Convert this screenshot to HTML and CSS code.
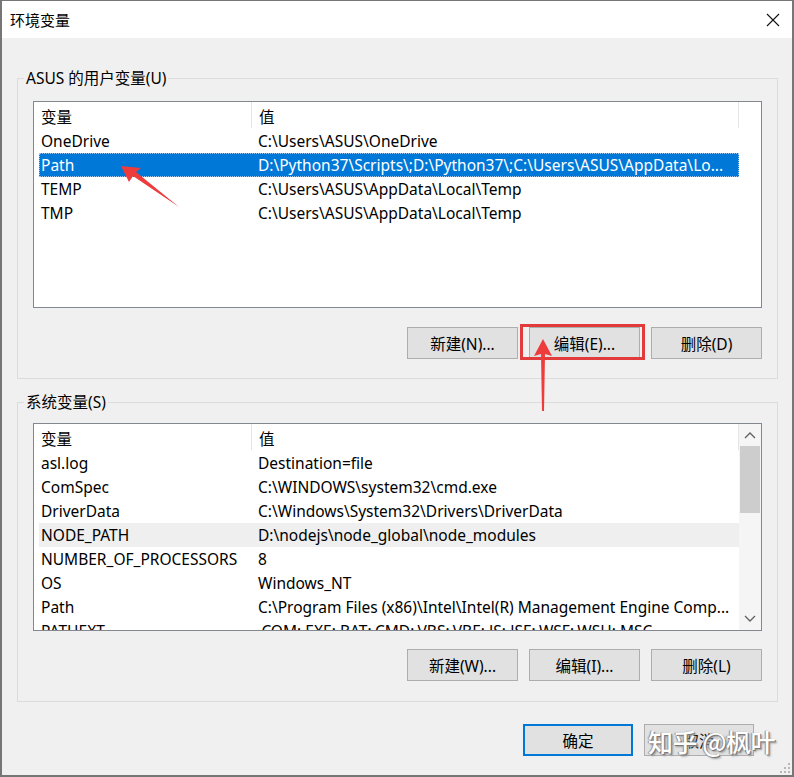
FILE: index.html
```html
<!DOCTYPE html>
<html lang="zh-CN">
<head>
<meta charset="utf-8">
<title>环境变量</title>
<link rel="stylesheet" href="styles.css">
</head>
<body>
<div class="window">
  <div class="titlebar">
    <span class="title">环境变量</span>
    <span class="close">
      <svg width="14" height="14" viewBox="0 0 14 14"><path d="M1 1 L13 13 M13 1 L1 13" stroke="#111" stroke-width="1.1" fill="none"/></svg>
    </span>
  </div>
  <div class="client">
    <fieldset class="group group-user">
      <legend>ASUS 的用户变量(U)</legend>
      <div class="group-inner">
        <div class="list list-user">
          <div class="rows">
            <div class="row head"><span class="c1">变量</span><span class="c2">值</span></div>
            <div class="row"><span class="c1">OneDrive</span><span class="c2">C:\Users\ASUS\OneDrive</span></div>
            <div class="row selected"><span class="c1">Path</span><span class="c2">D:\Python37\Scripts\;D:\Python37\;C:\Users\ASUS\AppData\Lo...</span></div>
            <div class="row"><span class="c1">TEMP</span><span class="c2">C:\Users\ASUS\AppData\Local\Temp</span></div>
            <div class="row"><span class="c1">TMP</span><span class="c2">C:\Users\ASUS\AppData\Local\Temp</span></div>
          </div>
          <div class="headfill"></div>
        </div>
        <div class="buttons">
          <button class="btn">新建(N)...</button>
          <button class="btn">编辑(E)...</button>
          <button class="btn">删除(D)</button>
        </div>
      </div>
    </fieldset>

    <fieldset class="group group-sys">
      <legend>系统变量(S)</legend>
      <div class="group-inner">
        <div class="list list-sys">
          <div class="rows">
            <div class="row head"><span class="c1">变量</span><span class="c2">值</span></div>
            <div class="row"><span class="c1">asl.log</span><span class="c2">Destination=file</span></div>
            <div class="row"><span class="c1">ComSpec</span><span class="c2">C:\WINDOWS\system32\cmd.exe</span></div>
            <div class="row"><span class="c1">DriverData</span><span class="c2">C:\Windows\System32\Drivers\DriverData</span></div>
            <div class="row hover"><span class="c1">NODE_PATH</span><span class="c2">D:\nodejs\node_global\node_modules</span></div>
            <div class="row"><span class="c1">NUMBER_OF_PROCESSORS</span><span class="c2">8</span></div>
            <div class="row"><span class="c1">OS</span><span class="c2">Windows_NT</span></div>
            <div class="row"><span class="c1">Path</span><span class="c2">C:\Program Files (x86)\Intel\Intel(R) Management Engine Comp...</span></div>
            <div class="row"><span class="c1">PATHEXT</span><span class="c2">.COM;.EXE;.BAT;.CMD;.VBS;.VBE;.JS;.JSE;.WSF;.WSH;.MSC</span></div>
          </div>
          <div class="scrollbar">
            <div class="sb-btn"><svg width="12" height="8" viewBox="0 0 12 8"><path d="M1 7 L6 2 L11 7" stroke="#606060" stroke-width="1.3" fill="none"/></svg></div>
            <div class="sb-track"><div class="sb-thumb"></div></div>
            <div class="sb-btn"><svg width="12" height="8" viewBox="0 0 12 8"><path d="M1 1 L6 6 L11 1" stroke="#606060" stroke-width="1.3" fill="none"/></svg></div>
          </div>
        </div>
        <div class="buttons">
          <button class="btn">新建(W)...</button>
          <button class="btn">编辑(I)...</button>
          <button class="btn">删除(L)</button>
        </div>
      </div>
    </fieldset>

    <div class="dialog-buttons">
      <button class="btn default">确定</button>
      <button class="btn">取消</button>
    </div>
  </div>

  <svg class="annot" width="794" height="777" viewBox="0 0 794 777">
    <rect x="521.5" y="325.5" width="122" height="33" fill="none" stroke="#e23b3b" stroke-width="3"/>
    <polygon points="121,166 141,168 136,172 179,207 133,176 129,182" fill="#ee3b3b"/>
    <polygon points="543,339 552,356 545,354 544,411 542,411 541,354 534,356" fill="#ee3b3b"/>
  </svg>
  <div class="watermark">知乎 @枫叶</div>
  <svg class="grip" width="10" height="10" viewBox="0 0 10 10">
    <rect x="8" y="0" width="2" height="2" fill="#b8b8b8"/>
    <rect x="4" y="4" width="2" height="2" fill="#b8b8b8"/>
    <rect x="8" y="4" width="2" height="2" fill="#b8b8b8"/>
    <rect x="0" y="8" width="2" height="2" fill="#b8b8b8"/>
    <rect x="4" y="8" width="2" height="2" fill="#b8b8b8"/>
    <rect x="8" y="8" width="2" height="2" fill="#b8b8b8"/>
  </svg>
</div>
</body>
</html>
```

FILE: styles.css
```css
* { box-sizing: border-box; }
html, body { margin: 0; padding: 0; background: #f0f0f0; }
body {
  font-family: "Noto Sans", "Noto Sans CJK SC", sans-serif;
  font-size: 15.5px;
  color: #000;
}
.window {
  position: relative;
  width: 794px;
  height: 777px;
  border: 2px solid #767676;
  border-top-width: 1px;
  background: #f0f0f0;
  overflow: hidden;
}
.titlebar {
  height: 37px;
  background: #fff;
  display: flex;
  align-items: center;
  justify-content: space-between;
  padding: 0 12px 0 8px;
}
.title { font-size: 15px; line-height: 20px; }
.close { display: flex; align-items: center; }
.client {
  padding: 0 14px 0 15px;
  display: flex;
  flex-direction: column;
}
.group {
  margin: 0;
  padding: 0;
  min-width: 0;
  border: 1px solid #dcdcdc;
}
.group legend {
  margin-left: 6px;
  padding: 0 2px;
  line-height: 20px;
  font-size: 15.5px;
}
.group-user { margin-top: 30px; }
.group-user .group-inner { padding: 13px 15px 19px 15px; }
.group-sys { margin-top: 13px; }
.group-sys .group-inner { padding: 11px 15px 20px 15px; }
.list {
  position: relative;
  background: #fff;
  border: 1px solid #828790;
  display: flex;
  overflow: hidden;
}
.list-user { height: 207px; }
.list-sys { height: 208px; }
.rows {
  width: 705px;
  padding-left: 5px;
  flex: none;
}
.row {
  display: grid;
  grid-template-columns: 212px 488px;
  height: 24px;
  line-height: 23px;
  white-space: nowrap;
}
.row span { overflow: hidden; padding-top: 1px; }
.row .c1 { padding-left: 2px; }
.row .c2 { padding-left: 7px; }
.row.head { height: 27px; padding-top: 3px; }
.row.head .c2 { border-left: 1px solid #e5e5e5; margin-top: -3px; padding-top: 4px; height: 26px; border-right: 1px solid #e5e5e5; }
.row.selected {
  background: #0078d7;
  color: #fff;
  outline: 1px dotted #9cc6ee;
  outline-offset: -1px;
}
.row.hover { background: #efefef; }
.headfill { flex: 1; }
.scrollbar {
  flex: 1;
  display: flex;
  flex-direction: column;
  background: #f5f5f5;
  padding-right: 1px;
}
.sb-btn {
  height: 22px;
  display: flex;
  align-items: center;
  justify-content: center;
  flex: none;
}
.sb-track { flex: 1; }
.sb-thumb { height: 67px; background: #cdcdcd; margin-left: 1px; }
.buttons {
  display: flex;
  justify-content: flex-end;
  gap: 11px;
}
.list-user + .buttons { margin-top: 19px; }
.list-sys + .buttons { margin-top: 18px; }
.btn {
  width: 111px;
  height: 32px;
  background: #e1e1e1;
  border: 1px solid #adadad;
  font-family: "Noto Sans", "Noto Sans CJK SC", sans-serif;
  font-size: 15.5px;
  color: #000;
  padding: 0;
  margin: 0;
  border-radius: 0;
}
.dialog-buttons {
  margin-top: 22px;
  display: flex;
  justify-content: flex-end;
  gap: 11px;
  padding-right: 24px;
}
.dialog-buttons .btn { width: 110px; }
.btn.default { border: 2px solid #0078d7; }
.annot { position: absolute; left: -2px; top: -1px; pointer-events: none; }
.watermark {
  position: absolute;
  left: 646px;
  top: 724px;
  font-family: "Noto Sans CJK SC", sans-serif;
  font-size: 25px;
  font-weight: 500;
  line-height: 32px;
  color: #fff;
  letter-spacing: -0.5px;
  text-shadow: 1px 1px 0 #7a7a7a, 2px 2px 2px #9a9a9a, -1px 0 1px #8a8a8a;
}
.grip { position: absolute; right: 2px; bottom: 2px; }
```
